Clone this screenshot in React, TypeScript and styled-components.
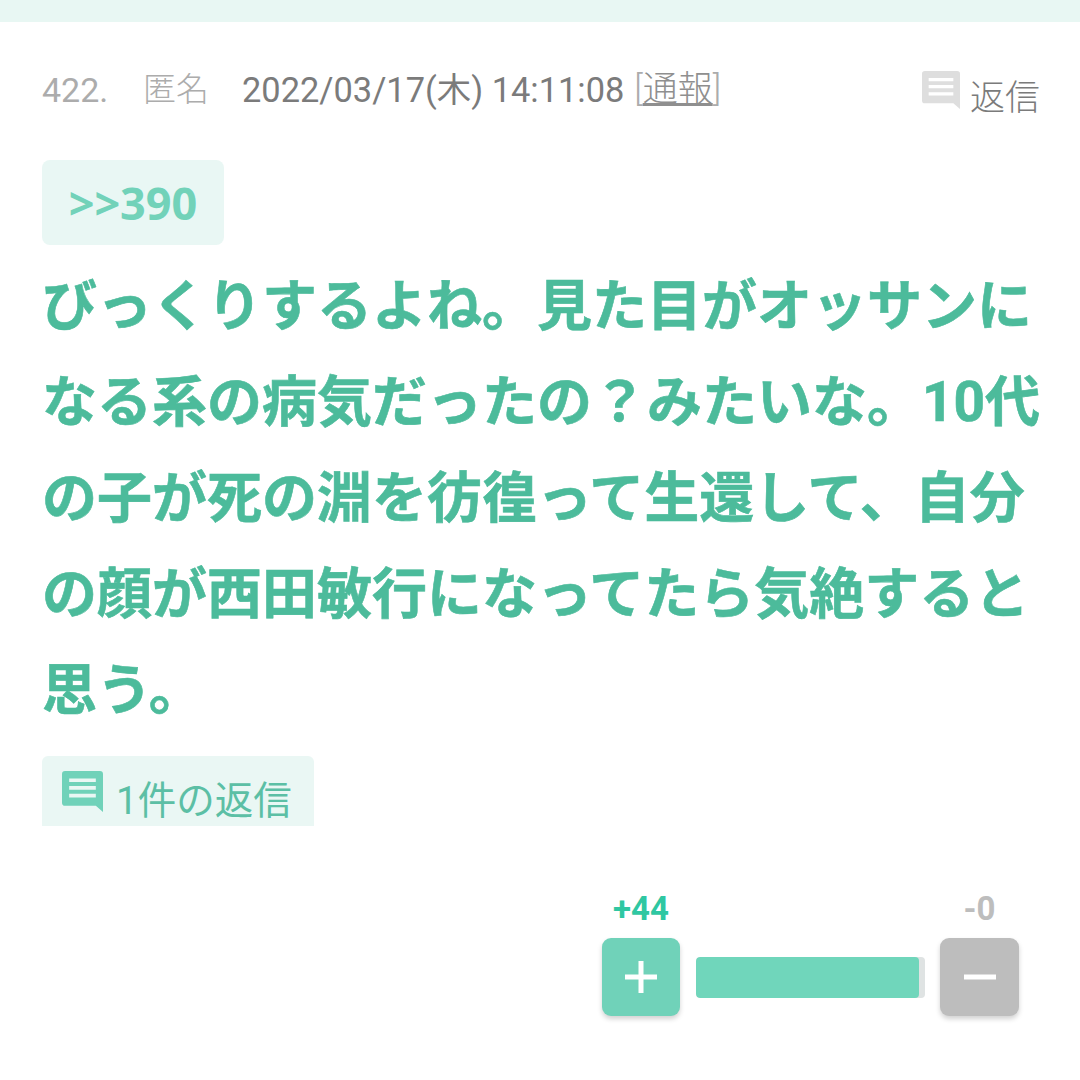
import React from "react";
import styled, {createGlobalStyle} from "styled-components";

const GlobalStyle = createGlobalStyle`
  html, body {
    margin: 0;
    padding: 0;
    background: #fff;
  }
  body {
    font-family: Roboto, "Noto Sans CJK JP", sans-serif;
  }
`;

const Page = styled.div`
  width: 1080px;
  height: 1080px;
  overflow: hidden;
  background: #fff;
`;

const TopBar = styled.div`
  height: 22px;
  background: #e8f7f3;
`;

const Post = styled.div`
  padding: 46px 40px 0 42px;
`;

const Header = styled.div`
  display: flex;
  justify-content: space-between;
  align-items: flex-start;
  height: 92px;
`;

const Meta = styled.div`
  display: flex;
  align-items: center;
  line-height: 44px;
  white-space: nowrap;
`;

const Number = styled.span`
  color: #acacac;
  font-size: 34px;
  width: 101px;
`;

const Name = styled.span`
  color: #acacac;
  font-size: 33px;
  font-weight: 300;
  width: 99px;
`;

const Date = styled.span`
  color: #7b7b7b;
  font-size: 34.4px;
`;

const Report = styled.span`
  color: #acacac;
  font-size: 35px;
  font-weight: 300;
  margin-left: 10px;

  span {
    color: #8f8f8f;
    text-decoration: underline;
  }
`;

const ReplyButton = styled.div`
  display: flex;
  align-items: flex-start;
  gap: 10px;
  color: #7b7b7b;
  font-size: 35px;
  font-weight: 300;
  padding-top: 3px;

  span {
    line-height: 48px;
    padding-top: 4px;
  }
`;

const CommentIcon = styled.svg<{ $size: number }>`
  width: ${({$size}) => $size}px;
  height: ${({$size}) => $size}px;
  flex-shrink: 0;
`;

const Quote = styled.div`
  width: 182px;
  height: 85px;
  border-radius: 8px;
  background: #e9f7f4;
  color: #72d2b9;
  font-family: "Noto Sans", sans-serif;
  font-size: 45px;
  font-weight: 700;
  line-height: 85px;
  text-align: center;
`;

const Body = styled.div`
  margin-top: 13px;
  color: #4cbb9b;
  font-size: 55px;
  font-weight: 700;
  -webkit-text-stroke: 0.6px #4cbb9b;
  line-height: 96px;
  width: 1010px;
`;

const RepliesChip = styled.div`
  display: flex;
  align-items: center;
  gap: 13px;
  margin-top: 18px;
  width: 272px;
  height: 70px;
  box-sizing: border-box;
  padding-left: 20px;
  background: #eaf7f4;
  color: #5cbfa5;
  font-size: 38.5px;
  border-radius: 6px 6px 0 0;

  span {
    padding-top: 12px;
    white-space: nowrap;
  }
`;

const Vote = styled.div`
  display: grid;
  grid-template-columns: 78px 260px 79px;
  justify-content: end;
  margin: 62px 21px 0 0;
`;

const Count = styled.div<{ $up?: boolean }>`
  height: 50px;
  text-align: center;
  font-size: 33px;
  font-weight: 700;
  line-height: 42px;
  color: ${({$up}) => $up ? "#2fc7a2" : "#bdbdbd"};
`;

const VoteButton = styled.div<{ $up?: boolean }>`
  height: 78px;
  border-radius: 9px;
  background: ${({$up}) => $up ? "#70d2b9" : "#bdbdbd"};
  box-shadow: 0 3px 5px rgba(0, 0, 0, 0.18);
  color: #fff;
  display: flex;
  align-items: center;
  justify-content: center;
`;

const Track = styled.div`
  align-self: center;
  height: 41px;
  margin: 0 15px 0 16px;
  border-radius: 4px;
  background: #dfe3e3;
  overflow: hidden;
`;

const Fill = styled.div`
  height: 100%;
  background: #70d6bb;
  border-radius: 4px;
`;

const Comment: React.FC<{ size: number; color: string; lines: string }> = ({size, color, lines}) => (
    <CommentIcon $size={size} viewBox="0 0 40 40">
        <path d="M3 0h34a3 3 0 0 1 3 3v37l-7-6H3a3 3 0 0 1-3-3V3a3 3 0 0 1 3-3z" fill={color}/>
        <path d="M7 9h26M7 16.500h26M7 24h26" stroke={lines} strokeWidth="3.500" fill="none"/>
    </CommentIcon>
);

export default function App() {
    const up = 44;
    const down = 0;
    const ratio = up / (up + down + 1.2);

    return <Page>
        <GlobalStyle/>
        <TopBar/>
        <Post>
            <Header>
                <Meta>
                    <Number>422.</Number>
                    <Name>匿名</Name>
                    <Date>2022/03/17(木) 14:11:08</Date>
                    <Report>[<span>通報</span>]</Report>
                </Meta>
                <ReplyButton>
                    <Comment size={38} color="#dedede" lines="#fff"/>
                    <span>返信</span>
                </ReplyButton>
            </Header>
            <Quote>&gt;&gt;390</Quote>
            <Body>
                びっくりするよね。見た目がオッサンに<br/>
                なる系の病気だったの？みたいな。10代<br/>
                の子が死の淵を彷徨って生還して、自分<br/>
                の顔が西田敏行になってたら気絶すると<br/>
                思う。
            </Body>
            <RepliesChip>
                <Comment size={41} color="#70d2b9" lines="#eaf7f4"/>
                <span>1件の返信</span>
            </RepliesChip>
            <Vote>
                <Count $up>+{up}</Count>
                <div/>
                <Count>-{down}</Count>
                <VoteButton $up>
                    <svg width="34" height="34" viewBox="0 0 34 34">
                        <path d="M17 1v32M1 17h32" stroke="#fff" strokeWidth="5"/>
                    </svg>
                </VoteButton>
                <Track>
                    <Fill style={{width: `${ratio * 100}%`}}/>
                </Track>
                <VoteButton>
                    <svg width="34" height="34" viewBox="0 0 34 34">
                        <path d="M1 17h32" stroke="#fff" strokeWidth="5"/>
                    </svg>
                </VoteButton>
            </Vote>
        </Post>
    </Page>;
}
